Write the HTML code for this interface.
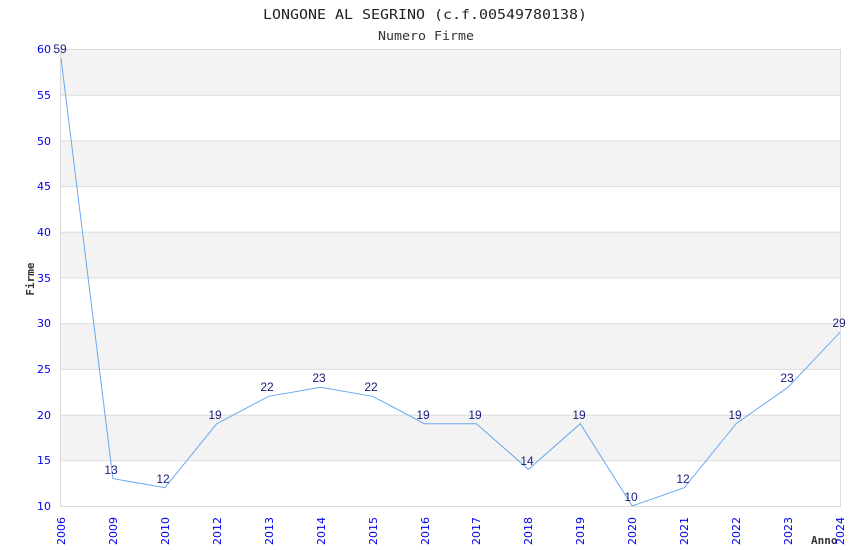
<!DOCTYPE html>
<html><head><meta charset="utf-8"><style>
html,body{margin:0;padding:0;background:#fff;}
svg{display:block;}
</style></head><body>
<svg width="850" height="550" xmlns="http://www.w3.org/2000/svg">
<rect width="850" height="550" fill="#fff"/>
<text x="425" y="19" text-anchor="middle" font-family="DejaVu Sans Mono, Liberation Mono, monospace" font-size="13" fill="#222" textLength="324" lengthAdjust="spacingAndGlyphs">LONGONE AL SEGRINO (c.f.00549780138)</text>
<text x="426" y="40" text-anchor="middle" font-family="DejaVu Sans Mono, Liberation Mono, monospace" font-size="12" fill="#333" textLength="96" lengthAdjust="spacingAndGlyphs">Numero Firme</text>
<g fill="#f3f3f3">
<rect x="61" y="49" width="779" height="45.7"/>
<rect x="61" y="140.4" width="779" height="45.7"/>
<rect x="61" y="231.8" width="779" height="45.7"/>
<rect x="61" y="323.2" width="779" height="45.7"/>
<rect x="61" y="414.6" width="779" height="45.7"/>
</g>
<g stroke="#dcdcdc" stroke-width="1">
<line x1="61" x2="840" y1="49.5" y2="49.5"/>
<line x1="61" x2="840" y1="95.2" y2="95.2"/>
<line x1="61" x2="840" y1="140.9" y2="140.9"/>
<line x1="61" x2="840" y1="186.6" y2="186.6"/>
<line x1="61" x2="840" y1="232.3" y2="232.3"/>
<line x1="61" x2="840" y1="278" y2="278"/>
<line x1="61" x2="840" y1="323.7" y2="323.7"/>
<line x1="61" x2="840" y1="369.4" y2="369.4"/>
<line x1="61" x2="840" y1="415.1" y2="415.1"/>
<line x1="61" x2="840" y1="460.8" y2="460.8"/>
<line x1="61" x2="840" y1="506.5" y2="506.5"/>
<line x1="60.5" x2="60.5" y1="49" y2="507"/>
<line x1="840.5" x2="840.5" y1="49" y2="507"/>
</g>
<g font-family="DejaVu Sans, Liberation Sans, sans-serif" font-size="11" fill="#0000ee" text-anchor="end">
<text x="51" y="53">60</text>
<text x="51" y="99">55</text>
<text x="51" y="145">50</text>
<text x="51" y="190">45</text>
<text x="51" y="236">40</text>
<text x="51" y="282">35</text>
<text x="51" y="327">30</text>
<text x="51" y="373">25</text>
<text x="51" y="419">20</text>
<text x="51" y="464">15</text>
<text x="51" y="510">10</text>
</g>
<text transform="translate(34,279) rotate(-90)" text-anchor="middle" font-family="DejaVu Sans Mono, Liberation Mono, monospace" font-size="11" font-weight="bold" fill="#333">Firme</text>
<text x="811" y="544" font-family="DejaVu Sans Mono, Liberation Mono, monospace" font-size="11" font-weight="bold" fill="#333">Anno</text>
<g font-family="DejaVu Sans, Liberation Sans, sans-serif" font-size="11" fill="#0000ee" text-anchor="start">
<text transform="translate(65,545) rotate(-90)">2006</text>
<text transform="translate(117,545) rotate(-90)">2009</text>
<text transform="translate(169,545) rotate(-90)">2010</text>
<text transform="translate(221,545) rotate(-90)">2012</text>
<text transform="translate(273,545) rotate(-90)">2013</text>
<text transform="translate(325,545) rotate(-90)">2014</text>
<text transform="translate(377,545) rotate(-90)">2015</text>
<text transform="translate(429,545) rotate(-90)">2016</text>
<text transform="translate(480,545) rotate(-90)">2017</text>
<text transform="translate(532,545) rotate(-90)">2018</text>
<text transform="translate(584,545) rotate(-90)">2019</text>
<text transform="translate(636,545) rotate(-90)">2020</text>
<text transform="translate(688,545) rotate(-90)">2021</text>
<text transform="translate(740,545) rotate(-90)">2022</text>
<text transform="translate(792,545) rotate(-90)">2023</text>
<text transform="translate(844,545) rotate(-90)">2024</text>
</g>
<polyline fill="none" stroke="#6aaaf0" stroke-width="1" points="61,58.1 112.9,478.6 164.9,487.7 216.8,423.7 268.7,396.3 320.7,387.2 372.6,396.3 424.5,423.7 476.4,423.7 528.4,469.4 580.3,423.7 632.2,506 684.2,487.7 736.1,423.7 788,387.2 840,332.3"/>
<g font-family="Liberation Sans, Arial, sans-serif" font-size="12" fill="#1a1a80" text-anchor="middle">
<text x="60" y="53">59</text>
<text x="111" y="474">13</text>
<text x="163" y="483">12</text>
<text x="215" y="419">19</text>
<text x="267" y="391">22</text>
<text x="319" y="382">23</text>
<text x="371" y="391">22</text>
<text x="423" y="419">19</text>
<text x="475" y="419">19</text>
<text x="527" y="465">14</text>
<text x="579" y="419">19</text>
<text x="631" y="501">10</text>
<text x="683" y="483">12</text>
<text x="735" y="419">19</text>
<text x="787" y="382">23</text>
<text x="839" y="327">29</text>
</g>
</svg>
</body></html>
